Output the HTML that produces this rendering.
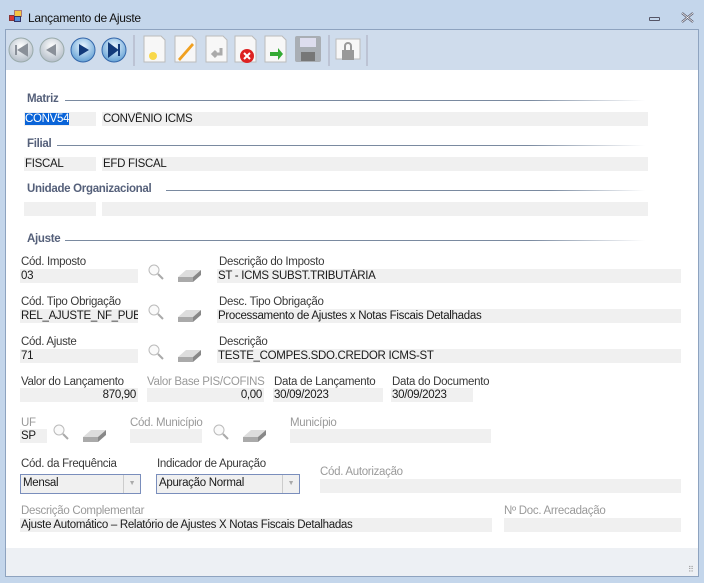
<!DOCTYPE html>
<html><head><meta charset="utf-8"><style>
*{margin:0;padding:0;box-sizing:border-box}
body{width:704px;height:583px;background:#c4d6eb;position:relative;overflow:hidden;font-family:"Liberation Sans",sans-serif;font-size:11.5px;color:#1a1a1a;letter-spacing:-0.3px}
.a{position:absolute}
.win{left:5px;top:29px;width:694px;height:548px;border:1px solid #8ea3bf;background:#fff}
.tb{left:6px;top:30px;width:692px;height:40px;background:#cfdcec}
.bot{left:6px;top:548px;width:692px;height:28px;background:#edf0f4}
.f{background:#f0f0f0;height:14px;line-height:14px;padding-left:1px;white-space:nowrap;overflow:hidden}
.l{color:#3a3a3a;white-space:nowrap;margin-top:2px}
.d{color:#9a9a9a}
.h{font-weight:bold;color:#55607a;font-size:11.5px;margin-top:2px}
.ln{height:1px;background:linear-gradient(90deg,#7a8aa0 80%,#fff)}
.cb{background:#f0f0f0;border:1px solid #7a8ebc;height:20px;line-height:17px;padding-left:2px}
.cb i{position:absolute;right:0;top:0;width:17px;height:18px;border-left:1px solid #ccc;color:#aaa;font-style:normal;font-size:7px;text-align:center;line-height:18px}
</style></head><body>
<div class="a" style="left:9px;top:10px;width:13px;height:12px">
<div class="a" style="left:0;top:5px;width:6px;height:6px;background:#d33;border:1px solid #833"></div>
<div class="a" style="left:5px;top:0;width:8px;height:7px;background:#f5c542;border:1px solid #a77"></div>
<div class="a" style="left:5px;top:6px;width:7px;height:6px;background:#5b8fd8;border:1px solid #336"></div></div>
<div class="a" style="left:28px;top:11px;font-size:12px;color:#111">Lançamento de Ajuste</div>
<div class="a" style="left:649px;top:17px;width:11px;height:4px;border:1px solid #556;border-radius:1px"></div>
<svg class="a" style="left:681px;top:12px" width="13" height="11"><path d="M1 1l11 9M12 1l-11 9" stroke="#556" stroke-width="2.2"/><path d="M1 1l11 9M12 1l-11 9" stroke="#fff" stroke-width="0.8"/></svg>
<div class="a win"></div>
<div class="a tb"></div>
<svg class="a" style="left:6px;top:30px" width="370" height="40">
<defs><radialGradient id="g" cx="50%" cy="35%" r="60%"><stop offset="0" stop-color="#fff"/><stop offset="1" stop-color="#b9c2cc"/></radialGradient>
<radialGradient id="b" cx="50%" cy="35%" r="60%"><stop offset="0" stop-color="#eaf6ff"/><stop offset="1" stop-color="#6fa8d8"/></radialGradient></defs>
<circle cx="15" cy="20" r="12" fill="url(#g)" stroke="#9aa"/><path d="M10 15v10M21 15l-8 5 8 5z" stroke="#8a9099" fill="#8a9099" stroke-width="2"/>
<circle cx="46" cy="20" r="12" fill="url(#g)" stroke="#9aa"/><path d="M50 14l-10 6 10 6z" fill="#8a9099"/>
<circle cx="77" cy="20" r="12" fill="url(#b)" stroke="#36a"/><path d="M73 14l10 6-10 6z" fill="#123a7a"/>
<circle cx="108" cy="20" r="12" fill="url(#b)" stroke="#36a"/><path d="M103 14l8 6-8 6z M113 14v12" fill="#123a7a" stroke="#123a7a" stroke-width="2"/>
<line x1="128" y1="5" x2="128" y2="36" stroke="#aab"/>
<g fill="#f7f7f7" stroke="#bbb"><path d="M138 6h17l4 4v22h-21z"/><path d="M169 6h17l4 4v22h-21z"/><path d="M200 6h17l4 4v22h-21z"/><path d="M229 6h17l4 4v22h-21z"/><path d="M259 6h17l4 4v22h-21z"/></g>
<circle cx="147" cy="26" r="4" fill="#f8d84a"/>
<path d="M172 29l14-16 2 2-14 16z" fill="#f0a020"/>
<path d="M215 18v6h-8m3-3l-3 3 3 3" stroke="#aaa" stroke-width="3" fill="none"/>
<circle cx="241" cy="26" r="7" fill="#d22"/><path d="M238 23l6 6m0-6l-6 6" stroke="#fff" stroke-width="2"/>
<path d="M264 22h8v-4l5 6-5 6v-4h-8z" fill="#3a3"/>
<rect x="289" y="6" width="26" height="26" fill="#a9aeb4" rx="2"/><rect x="294" y="8" width="16" height="9" fill="#dde"/><rect x="295" y="22" width="14" height="9" fill="#777"/>
<line x1="323" y1="5" x2="323" y2="36" stroke="#aab"/>
<rect x="330" y="9" width="24" height="20" fill="#f7f7f7" stroke="#bbb"/><rect x="336" y="20" width="12" height="10" fill="#999"/><path d="M339 20v-4a3 3 0 016 0v4" stroke="#999" stroke-width="2" fill="none"/>
<line x1="361" y1="5" x2="361" y2="36" stroke="#aab"/>
</svg>
<div class="a bot"></div>

<div class="a h" style="left:27px;top:91px">Matriz</div><div class="a ln" style="left:65px;top:100px;width:580px"></div>
<div class="a f" style="left:24px;top:112px;width:72px"><span style="background:#0a64d8;color:#fff">CONV54</span></div>
<div class="a f" style="left:102px;top:112px;width:546px">CONVÊNIO ICMS</div>
<div class="a h" style="left:27px;top:136px">Filial</div><div class="a ln" style="left:57px;top:145px;width:588px"></div>
<div class="a f" style="left:24px;top:157px;width:72px">FISCAL</div>
<div class="a f" style="left:102px;top:157px;width:546px">EFD FISCAL</div>
<div class="a h" style="left:27px;top:181px">Unidade Organizacional</div><div class="a ln" style="left:166px;top:190px;width:479px"></div>
<div class="a f" style="left:24px;top:202px;width:72px"></div>
<div class="a f" style="left:102px;top:202px;width:546px"></div>
<div class="a h" style="left:27px;top:231px">Ajuste</div><div class="a ln" style="left:65px;top:240px;width:580px"></div>

<div class="a l" style="left:21px;top:254px">Cód. Imposto</div>
<div class="a f" style="left:20px;top:269px;width:118px">03</div>
<div class="a l" style="left:219px;top:254px">Descrição do Imposto</div>
<div class="a f" style="left:217px;top:269px;width:464px">ST - ICMS SUBST.TRIBUTÁRIA</div>
<div class="a l" style="left:21px;top:294px">Cód. Tipo Obrigação</div>
<div class="a f" style="left:20px;top:309px;width:118px">REL_AJUSTE_NF_PUB</div>
<div class="a l" style="left:219px;top:294px">Desc. Tipo Obrigação</div>
<div class="a f" style="left:217px;top:309px;width:464px">Processamento de Ajustes x Notas Fiscais Detalhadas</div>
<div class="a l" style="left:21px;top:334px">Cód. Ajuste</div>
<div class="a f" style="left:20px;top:349px;width:118px">71</div>
<div class="a l" style="left:219px;top:334px">Descrição</div>
<div class="a f" style="left:217px;top:349px;width:464px">TESTE_COMPES.SDO.CREDOR ICMS-ST</div>

<div class="a l" style="left:21px;top:374px">Valor do Lançamento</div>
<div class="a f" style="left:20px;top:388px;width:118px;text-align:right;padding-right:2px">870,90</div>
<div class="a l d" style="left:147px;top:374px">Valor Base PIS/COFINS</div>
<div class="a f" style="left:147px;top:388px;width:117px;text-align:right;padding-right:2px">0,00</div>
<div class="a l" style="left:274px;top:374px">Data de Lançamento</div>
<div class="a f" style="left:273px;top:388px;width:110px">30/09/2023</div>
<div class="a l" style="left:392px;top:374px">Data do Documento</div>
<div class="a f" style="left:391px;top:388px;width:82px">30/09/2023</div>

<div class="a l d" style="left:21px;top:415px">UF</div>
<div class="a f" style="left:20px;top:429px;width:27px">SP</div>
<div class="a l d" style="left:130px;top:415px">Cód. Município</div>
<div class="a f" style="left:130px;top:429px;width:72px"></div>
<div class="a l d" style="left:290px;top:415px">Município</div>
<div class="a f" style="left:290px;top:429px;width:201px"></div>

<svg class="a" style="left:0;top:0" width="704" height="583">
<g id="ic"><circle cx="154" cy="270" r="5" fill="#fafafa" stroke="#bbb"/><line x1="158" y1="274" x2="163" y2="279" stroke="#aaa" stroke-width="2"/>
<path d="M178 277l8-7h15l-8 7z" fill="#ddd"/><path d="M178 277h15v5h-15z" fill="#aaa"/><path d="M193 277l8-7v5l-8 7z" fill="#888"/></g>
<use href="#ic" y="40"/><use href="#ic" y="80"/><use href="#ic" x="-95" y="160"/><use href="#ic" x="65" y="160"/>
</svg>

<div class="a l" style="left:21px;top:456px">Cód. da Frequência</div>
<div class="a cb" style="left:20px;top:474px;width:121px">Mensal<i>▼</i></div>
<div class="a l" style="left:157px;top:456px">Indicador de Apuração</div>
<div class="a cb" style="left:156px;top:474px;width:144px">Apuração Normal<i>▼</i></div>
<div class="a l d" style="left:320px;top:464px">Cód. Autorização</div>
<div class="a f" style="left:320px;top:479px;width:361px"></div>
<div class="a l d" style="left:21px;top:503px">Descrição Complementar</div>
<div class="a f" style="left:20px;top:518px;width:472px">Ajuste Automático – Relatório de Ajustes X Notas Fiscais Detalhadas</div>
<div class="a l d" style="left:504px;top:503px">Nº Doc. Arrecadação</div>
<div class="a f" style="left:504px;top:518px;width:177px"></div>
<div class="a" style="left:688px;top:565px;color:#999;font-size:8px">⠿</div>
</body></html>
